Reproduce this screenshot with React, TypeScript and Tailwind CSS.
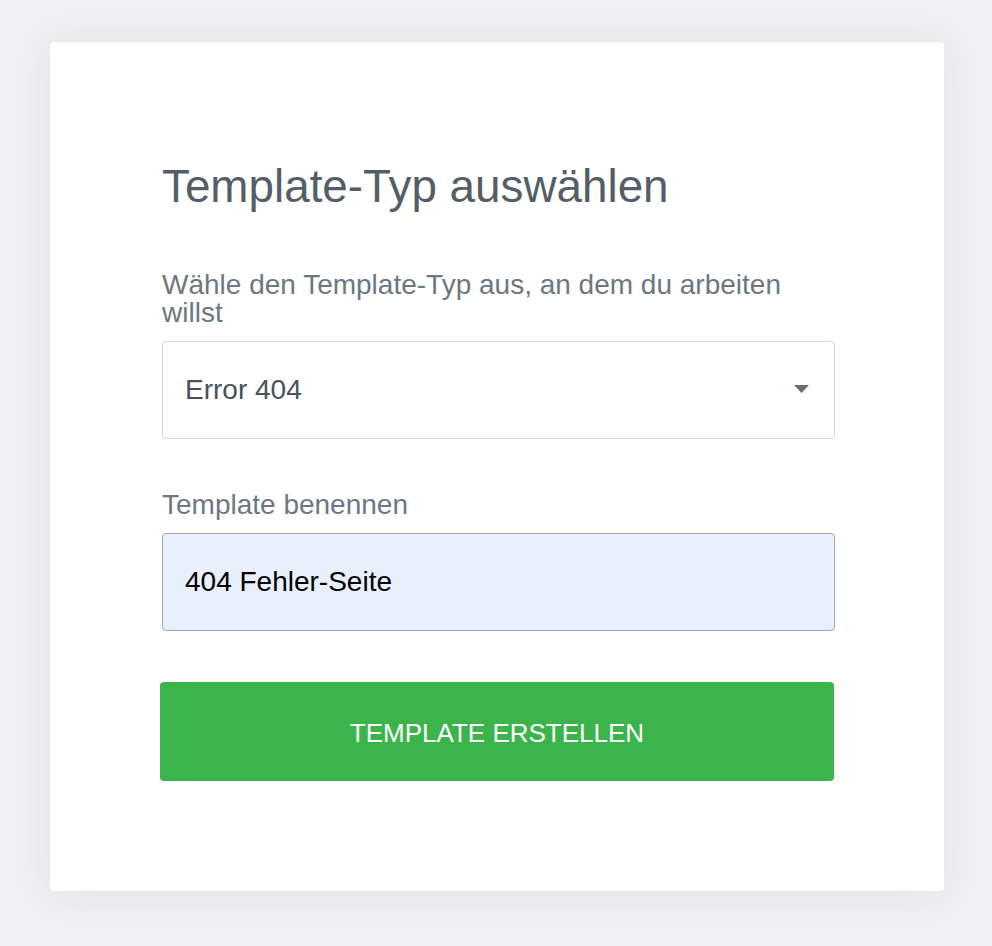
import { useState } from "react";

const TEMPLATE_TYPES = ["Error 404", "Startseite", "Blogbeitrag", "Archiv", "Suchergebnisse"];

export default function App() {
  const [type, setType] = useState(TEMPLATE_TYPES[0]);
  const [name, setName] = useState("404 Fehler-Seite");

  return (
    <div className="min-h-screen bg-[#eff0f2] pl-[50px] pr-[48px] pt-[42px] font-['Liberation_Sans',Arial,sans-serif]">
      <div className="rounded-[4px] bg-white pl-[112px] pr-[109px] pt-[118px] pb-[110px] shadow-[0_2px_40px_rgba(30,40,60,0.07)]">
        <h1 className="text-[45.8px] leading-[53px] text-[#555e68]">Template-Typ auswählen</h1>

        <label className="mt-[58px] block text-[28px] leading-[28px] text-[#6d7782]">
          Wähle den Template-Typ aus, an dem du arbeiten willst
        </label>
        <div className="relative mt-[14px]">
          <select
            value={type}
            onChange={(e) => setType(e.target.value)}
            className="h-[98px] w-full appearance-none rounded-[4px] border border-[#d3d8dd] bg-white pl-[22px] pr-12 text-[28px] text-[#4a5159] outline-none"
          >
            {TEMPLATE_TYPES.map((t) => (
              <option key={t}>{t}</option>
            ))}
          </select>
          <svg
            className="pointer-events-none absolute right-[26px] top-[44px]"
            width="15"
            height="8"
            viewBox="0 0 15 8"
          >
            <path d="M0 0h15L7.5 8z" fill="#646c76" />
          </svg>
        </div>

        <label className="mt-[52px] block text-[28px] leading-[28px] text-[#6d7782]">Template benennen</label>
        <input
          value={name}
          onChange={(e) => setName(e.target.value)}
          className="mt-[14px] h-[98px] w-full rounded-[4px] border border-[#a0a8b3] bg-[#e8f0fe] pl-[22px] text-[28px] text-black outline-none"
        />

        <button className="-ml-[2px] mt-[51px] flex h-[99px] w-[674px] items-center justify-center rounded-[4px] bg-[#3bb54b] pt-[3px] text-[26px] uppercase text-white">
          Template erstellen
        </button>
      </div>
    </div>
  );
}
